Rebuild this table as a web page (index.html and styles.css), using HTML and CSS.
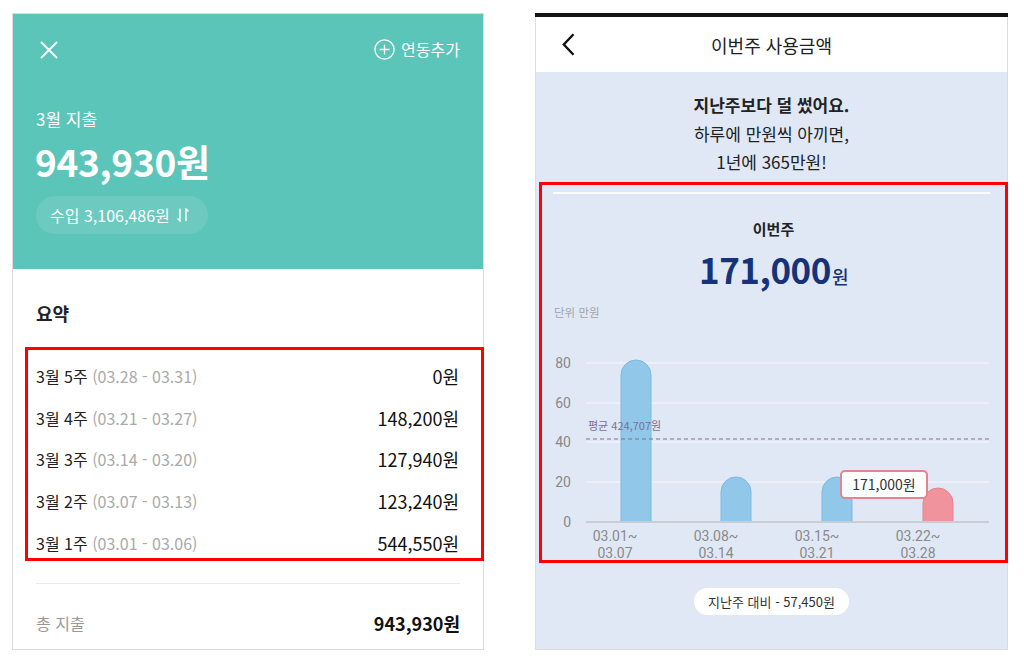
FILE: index.html
```html
<!DOCTYPE html>
<html lang="ko">
<head>
<meta charset="utf-8">
<link rel="stylesheet" href="styles.css">
</head>
<body>
<div class="page">
  <section class="lp">
    <header class="lp-head">
      <div class="lp-top">
        <svg class="ic-x" width="18" height="18" viewBox="0 0 18 18"><path d="M1 1L17 17M17 1L1 17" stroke="#fff" stroke-width="1.8" fill="none"/></svg>
        <div class="link">
          <svg width="21" height="21" viewBox="0 0 21 21"><circle cx="10.5" cy="10.5" r="9.6" stroke="#fff" stroke-width="1.3" fill="none"/><path d="M10.5 5.5V15.5M5.5 10.5H15.5" stroke="#fff" stroke-width="1.3"/></svg>
          <span>연동추가</span>
        </div>
      </div>
      <div class="lp-label">3월 지출</div>
      <div class="lp-amount">943,930원</div>
      <div class="pill">수입 3,106,486원
        <svg width="12" height="14" viewBox="0 0 12 14"><path d="M3 0.5V13L0.5 10.5M9 13V1L11.5 3.5" stroke="#fff" stroke-width="1.4" fill="none"/></svg>
      </div>
    </header>
    <div class="lp-body">
      <h2 class="sum-title">요약</h2>
      <ul class="weeks">
        <li><span>3월 5주 <em>(03.28 - 03.31)</em></span><b>0원</b></li>
        <li><span>3월 4주 <em>(03.21 - 03.27)</em></span><b>148,200원</b></li>
        <li><span>3월 3주 <em>(03.14 - 03.20)</em></span><b>127,940원</b></li>
        <li><span>3월 2주 <em>(03.07 - 03.13)</em></span><b>123,240원</b></li>
        <li><span>3월 1주 <em>(03.01 - 03.06)</em></span><b>544,550원</b></li>
      </ul>
      <div class="divider"></div>
      <div class="total"><span>총 지출</span><b>943,930원</b></div>
    </div>
  </section>

  <section class="rp">
    <div class="blackbar"></div>
    <header class="rp-head">
      <svg class="back" width="13" height="23" viewBox="0 0 13 23"><path d="M11.5 1.2L1.8 11.5L11.5 21.8" stroke="#111" stroke-width="2.4" fill="none"/></svg>
      <h1>이번주 사용금액</h1>
      <span></span>
    </header>
    <div class="rp-body">
      <p class="msg"><strong>지난주보다 덜 썼어요.</strong><br>하루에 만원씩 아끼면,<br>1년에 365만원!</p>
      <div class="box">
        <div class="wline"></div>
        <div class="wk">이번주</div>
        <div class="big">171,000<small>원</small></div>
        <svg class="chart" width="462" height="268" viewBox="543 292 462 268">
          <text x="555" y="317" class="unit">단위 만원</text>
          <g class="grid">
            <line x1="587" y1="363" x2="990" y2="363"/>
            <line x1="587" y1="403" x2="990" y2="403"/>
            <line x1="587" y1="442" x2="990" y2="442"/>
            <line x1="587" y1="482" x2="990" y2="482"/>
          </g>
          <g class="ylab">
            <text x="572" y="368">80</text>
            <text x="572" y="408">60</text>
            <text x="572" y="447">40</text>
            <text x="572" y="487">20</text>
            <text x="572" y="527">0</text>
          </g>
          <path class="bar" d="M622 522V375A15 15 0 0 1 652 375V522Z"/>
          <path class="bar" d="M722 522V492A15 15 0 0 1 752 492V522Z"/>
          <path class="bar" d="M823 522V492A15 15 0 0 1 853 492V522Z"/>
          <path class="bar pink" d="M924 522V503A15 15 0 0 1 954 503V522Z"/>
          <line class="base" x1="587" y1="522" x2="990" y2="522"/>
          <line class="avg" x1="587" y1="439" x2="990" y2="439"/>
          <text class="avgl" x="589" y="430">평균 424,707원</text>
          <rect class="tip" x="842" y="471" width="86" height="27" rx="4"/>
          <text class="tipt" x="885" y="490">171,000원</text>
          <g class="xlab">
            <text x="616" y="541">03.01~</text><text x="616" y="558">03.07</text>
            <text x="717" y="541">03.08~</text><text x="717" y="558">03.14</text>
            <text x="818" y="541">03.15~</text><text x="818" y="558">03.21</text>
            <text x="919" y="541">03.22~</text><text x="919" y="558">03.28</text>
          </g>
        </svg>
      </div>
      <div class="cmp">지난주 대비 - 57,450원</div>
    </div>
  </section>
</div>
</body>
</html>
```
FILE: styles.css
```css
* { box-sizing: border-box; }
html, body { margin: 0; padding: 0; background: #fff; }
body { font-family: "Noto Sans CJK KR", "Noto Sans", sans-serif; color: #222; }
.page { display: flex; align-items: flex-start; padding: 13px 0 0 12px; gap: 51px; }

/* left panel */
.lp { width: 472px; height: 637px; border: 1px solid #dcdcdc; display: flex; flex-direction: column; }
.lp-head { background: #5cc5b9; height: 255px; padding: 25px 23px 0 27px; color: #fff; }
.lp-top { display: flex; justify-content: space-between; align-items: center; height: 21px; }
.ic-x { display: block; }
.link { display: flex; align-items: center; gap: 6px; font-size: 16px; line-height: 21px; }
.link svg { display: block; }
.lp-label { font-size: 17px; line-height: 24px; margin: 47px 0 0 -4px; }
.lp-amount { font-size: 37px; font-weight: 700; line-height: 46px; margin: 7px 0 0 -5px; letter-spacing: -0.3px; }
.pill { display: inline-flex; align-items: center; gap: 7px; height: 38px; margin: 12px 0 0 -4px; padding: 0 19px 0 14px; border-radius: 19px; background: rgba(255,255,255,0.1); font-size: 16px; }
.pill svg { display: block; }

.lp-body { display: flex; flex-direction: column; }
.sum-title { font-size: 18px; font-weight: 700; line-height: 26px; margin: 31px 0 0 23px; }
.weeks { list-style: none; margin: 21px -1px 0 12px; padding: 14px 22px 3px 8px; border: 3px solid #ff0000; display: flex; flex-direction: column; gap: 17.7px; }
.weeks li { display: flex; justify-content: space-between; align-items: center; height: 24px; }
.weeks span { font-size: 16px; color: #222; }
.weeks em { font-style: normal; color: #aaa; }
.weeks b { font-weight: 400; font-size: 18px; color: #111; }
.divider { height: 1px; background: #ececec; margin: 22px 23px 0 23px; }
.total { display: flex; justify-content: space-between; align-items: center; height: 24px; margin: 27px 23px 0 23px; }
.total span { font-size: 16px; color: #999; }
.total b { font-size: 18px; font-weight: 700; color: #111; }

/* right panel */
.rp { width: 473px; height: 637px; border: 1px solid #dcdcdc; border-top: none; display: flex; flex-direction: column; }
.blackbar { height: 4px; background: #151515; margin: 0 -1px; }
.rp-head { height: 55px; background: #fff; display: grid; grid-template-columns: 1fr auto 1fr; align-items: center; padding-left: 26px; }
.back { display: block; }
.rp-head h1 { margin: 0 0 0 -26px; font-size: 18px; font-weight: 400; color: #222; }
.rp-body { flex: 1; background: #e0e8f5; display: flex; flex-direction: column; align-items: center; }
.msg { margin: 19px 0 0; font-size: 17px; line-height: 28.5px; text-align: center; color: #222; }
.msg strong { font-weight: 700; }
.box { align-self: stretch; margin: 5px -1px 0 3px; border: 3px solid #ff0000; display: flex; flex-direction: column; align-items: center; }
.wline { align-self: stretch; height: 2px; background: rgba(255,255,255,0.85); margin: 7px 15px 0 11px; }
.wk { font-size: 15px; font-weight: 700; line-height: 22px; margin-top: 24px; color: #222; }
.big { height: 44px; font-size: 35px; font-weight: 700; line-height: 44px; color: #16327a; margin-top: 7px; letter-spacing: -0.5px; display: flex; align-items: baseline; }
.big small { font-size: 18px; font-weight: 500; margin-left: 1px; line-height: 1; }
.chart { display: block; align-self: stretch; margin-top: 1px; }
.unit { font-size: 11.5px; fill: #a0a4ab; }
.grid line { stroke: #eef2fa; stroke-width: 1.5; }
.ylab text { font-family: Roboto, sans-serif; font-size: 14px; fill: #888; text-anchor: end; }
.bar { fill: #91c8ea; stroke: #7db8e0; stroke-width: 1; }
.bar.pink { fill: #f0939d; stroke: #e6838e; }
.base { stroke: #c8ccd3; stroke-width: 2; }
.avg { stroke: #7b7090; stroke-width: 1.2; stroke-dasharray: 4 3; }
.avgl { font-size: 11px; fill: #7b7090; }
.tip { fill: rgba(255,255,255,0.93); stroke: #e5838e; stroke-width: 2; }
.tipt { font-size: 14px; fill: #333; text-anchor: middle; }
.xlab text { font-family: Roboto, sans-serif; font-size: 14px; fill: #8a8a8a; text-anchor: middle; }
.cmp { margin-top: 25px; height: 27px; padding: 0 14px; border-radius: 14px; background: #fff; font-size: 13px; line-height: 27px; color: #333; }
```
